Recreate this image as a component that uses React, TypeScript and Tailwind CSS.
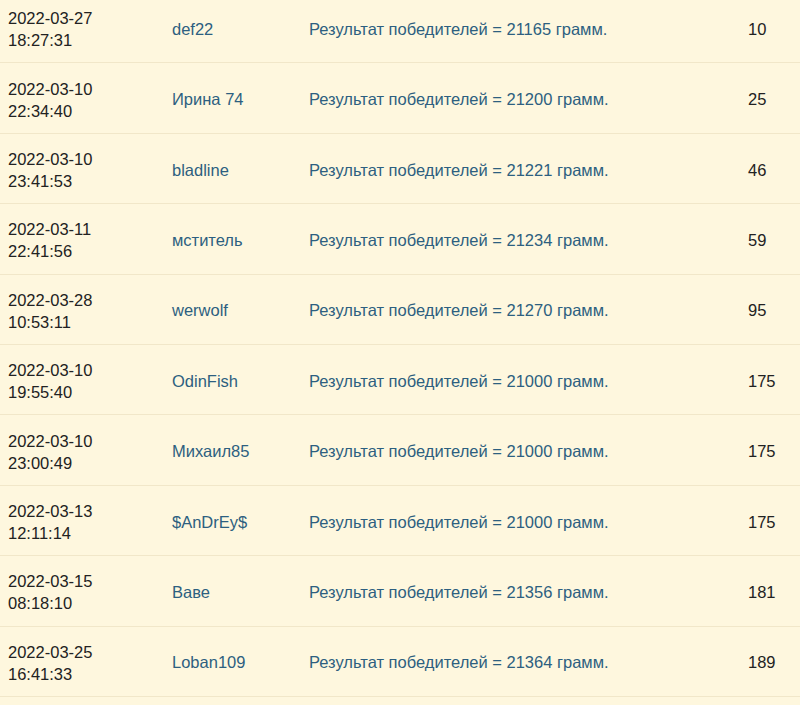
const rows = [
  { date: "2022-03-27", time: "18:27:31", name: "def22", grams: "21165", place: "10" },
  { date: "2022-03-10", time: "22:34:40", name: "Ирина 74", grams: "21200", place: "25" },
  { date: "2022-03-10", time: "23:41:53", name: "bladline", grams: "21221", place: "46" },
  { date: "2022-03-11", time: "22:41:56", name: "мститель", grams: "21234", place: "59" },
  { date: "2022-03-28", time: "10:53:11", name: "werwolf", grams: "21270", place: "95" },
  { date: "2022-03-10", time: "19:55:40", name: "OdinFish", grams: "21000", place: "175" },
  { date: "2022-03-10", time: "23:00:49", name: "Михаил85", grams: "21000", place: "175" },
  { date: "2022-03-13", time: "12:11:14", name: "$AnDrEy$", grams: "21000", place: "175" },
  { date: "2022-03-15", time: "08:18:10", name: "Ваве", grams: "21356", place: "181" },
  { date: "2022-03-25", time: "16:41:33", name: "Loban109", grams: "21364", place: "189" },
]

export default function App() {
  return (
    <div className="w-[800px] h-[705px] overflow-hidden bg-[#fef7de] font-['Liberation_Sans',Arial,sans-serif] text-[16.5px] text-[#222]">
      <div className="-mt-[7px]">
        {rows.map((r, i) => (
          <div
            key={i}
            className="grid grid-cols-[164px_137px_439px_1fr] h-[70.4px] border-b border-[#f1e7c9] items-center pt-[3px]"
          >
            <div className="pl-2 leading-[22px]">
              <div>{r.date}</div>
              <div>{r.time}</div>
            </div>
            <div className="pl-2 text-[#2d5f80]">{r.name}</div>
            <div className="pl-2 text-[#2d5f80]">Результат победителей = {r.grams} грамм.</div>
            <div className="pl-2">{r.place}</div>
          </div>
        ))}
      </div>
    </div>
  )
}
